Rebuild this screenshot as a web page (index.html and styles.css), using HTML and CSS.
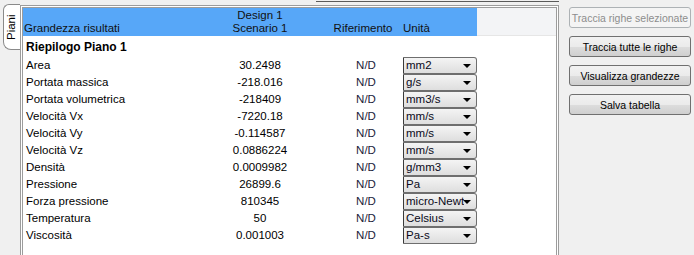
FILE: index.html
```html
<!DOCTYPE html>
<html lang="it">
<head>
  <meta charset="UTF-8" />
  <title>Riepilogo risultati</title>
  <link rel="stylesheet" href="styles.css">
</head>
<body>
  <div class="app">
    <div class="tabs">
      <div class="tab">Piani</div>
    </div>

    <div class="main">
      <div class="splitter"></div>
      <div class="frame">
        <div class="grid">
          <div class="hd hd-name">Grandezza risultati</div>
          <div class="hd hd-val">Design 1<br>Scenario 1</div>
          <div class="hd hd-ref">Riferimento</div>
          <div class="hd hd-unit">Unità</div>
          <div class="hd hd-rest"></div>

          <div class="group">Riepilogo Piano 1</div>

          <div class="name">Area</div><div class="val">30.2498</div><div class="ref">N/D</div>
          <div class="unit"><div class="combo"><span>mm2</span></div></div><div class="rest"></div>

          <div class="name">Portata massica</div><div class="val">-218.016</div><div class="ref">N/D</div>
          <div class="unit"><div class="combo"><span>g/s</span></div></div><div class="rest"></div>

          <div class="name">Portata volumetrica</div><div class="val">-218409</div><div class="ref">N/D</div>
          <div class="unit"><div class="combo"><span>mm3/s</span></div></div><div class="rest"></div>

          <div class="name">Velocità Vx</div><div class="val">-7220.18</div><div class="ref">N/D</div>
          <div class="unit"><div class="combo"><span>mm/s</span></div></div><div class="rest"></div>

          <div class="name">Velocità Vy</div><div class="val">-0.114587</div><div class="ref">N/D</div>
          <div class="unit"><div class="combo"><span>mm/s</span></div></div><div class="rest"></div>

          <div class="name">Velocità Vz</div><div class="val">0.0886224</div><div class="ref">N/D</div>
          <div class="unit"><div class="combo"><span>mm/s</span></div></div><div class="rest"></div>

          <div class="name">Densità</div><div class="val">0.0009982</div><div class="ref">N/D</div>
          <div class="unit"><div class="combo"><span>g/mm3</span></div></div><div class="rest"></div>

          <div class="name">Pressione</div><div class="val">26899.6</div><div class="ref">N/D</div>
          <div class="unit"><div class="combo"><span>Pa</span></div></div><div class="rest"></div>

          <div class="name">Forza pressione</div><div class="val">810345</div><div class="ref">N/D</div>
          <div class="unit"><div class="combo"><span>micro-Newton</span></div></div><div class="rest"></div>

          <div class="name">Temperatura</div><div class="val">50</div><div class="ref">N/D</div>
          <div class="unit"><div class="combo"><span>Celsius</span></div></div><div class="rest"></div>

          <div class="name">Viscosità</div><div class="val">0.001003</div><div class="ref">N/D</div>
          <div class="unit"><div class="combo"><span>Pa-s</span></div></div><div class="rest"></div>
        </div>
      </div>
    </div>

    <div class="side">
      <button class="btn" disabled>Traccia righe selezionate</button>
      <button class="btn">Traccia tutte le righe</button>
      <button class="btn">Visualizza grandezze</button>
      <button class="btn">Salva tabella</button>
    </div>
  </div>
</body>
</html>
```

FILE: styles.css
```css
* { box-sizing: border-box; }
body {
  margin: 0;
  background: #f0f0f0;
  font-family: 'Liberation Sans', Arial, sans-serif;
  font-size: 11.5px;
  color: #000;
  overflow: hidden;
}
.app { display: flex; height: 255px; }

/* vertical tab strip */
.tabs { width: 20px; padding: 4px 0 0 3px; }
.tab {
  width: 17px; height: 46px;
  background: #fff;
  border: 1px solid #8a8a8a;
  border-left: none;
  border-radius: 0 8px 6px 0;
  writing-mode: vertical-rl;
  transform: rotate(180deg);
  text-align: center;
  line-height: 15px;
  font-size: 11.5px;
}

.main { width: 539px; display: flex; flex-direction: column; }
.splitter { height: 1px; margin: 1px 0 0 296px; background: #5a5a5a; }
.frame {
  margin-top: 3px;
  flex: 1;
  border: 3px double #9c9c9c;
  border-bottom: none;
  background: #fff;
  overflow: hidden;
}

.grid {
  display: grid;
  grid-template-columns: 197px 80px 100px 77px 1fr;
  grid-template-rows: 28px 21px;
  grid-auto-rows: 17px;
}
.hd {
  background: #57a7f8;
  display: flex;
  align-items: flex-end;
  padding-bottom: 1px;
  line-height: 13px;
  color: #111;
}
.hd-name { padding-left: 1px; }
.hd-val { justify-content: center; text-align: center; }
.hd-ref { justify-content: center; padding-left: 26px; }
.hd-unit { padding-left: 3px; }
.hd-rest { background: #f3f4f6; border-bottom: 1px solid #e6e6e6; }

.group {
  grid-column: 1 / -1;
  padding: 4px 0 0 3px;
  font-weight: bold;
  font-size: 12px;
}
.name, .val, .ref { line-height: 17px; white-space: nowrap; }
.name { padding-left: 3px; }
.val { text-align: center; }
.ref { text-align: center; padding-left: 32px; color: #1c1c3a; }
.unit { padding-left: 3px; }
.combo {
  position: relative;
  height: 17px;
  border: 1px solid #6e6e6e;
  border-left-color: #3a3a3a;
  border-radius: 0 3px 3px 0;
  background: linear-gradient(#f4f4f4, #dedede);
  padding: 0 12px 0 2px;
  line-height: 15px;
  color: #0a0a1a;
}
.combo span { display: block; overflow: hidden; white-space: nowrap; }
.combo::after {
  content: "";
  position: absolute;
  right: 5px; top: 6px;
  border-left: 4px solid transparent;
  border-right: 4px solid transparent;
  border-top: 4px solid #000;
}

.side {
  flex: 1;
  padding: 7px 0 0 10px;
  display: flex;
  flex-direction: column;
  gap: 8px;
}
.btn {
  width: 122px; height: 21px;
  font-family: inherit;
  font-size: 10.5px;
  white-space: nowrap;
  color: #000;
  border: 1px solid #707070;
  border-radius: 3px;
  background: linear-gradient(#f2f2f2 0%, #ebebeb 50%, #dddddd 51%, #cfcfcf 100%);
  padding: 0;
}
.btn:disabled {
  color: #8d8d8d;
  border-color: #adb2b5;
  background: #f4f4f4;
}
```
